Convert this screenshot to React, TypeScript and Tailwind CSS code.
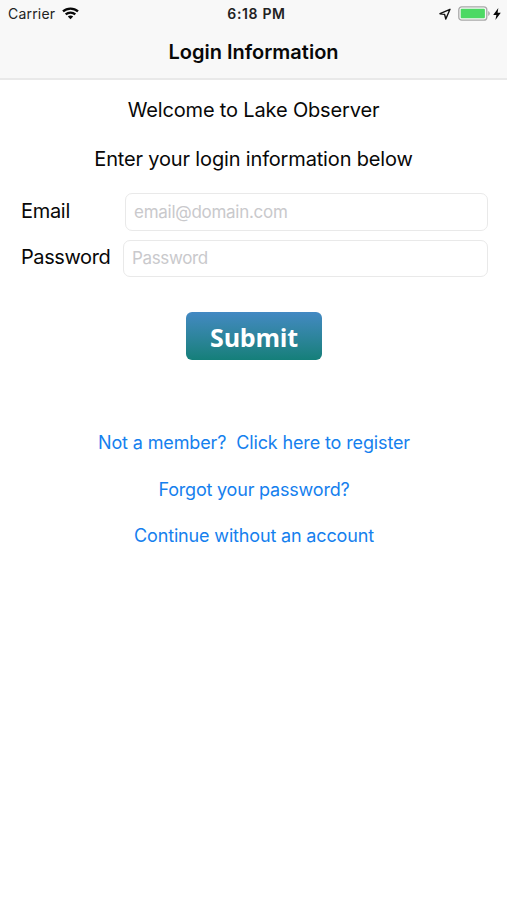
function WifiIcon() {
  return (
    <svg className="ml-[7px] h-[13px] w-[17px]" viewBox="0 0 17 13" fill="none" stroke="#080808" strokeWidth="2.3">
      <path d="M1 4.4C5.2.6 11.8.6 16 4.4" />
      <path d="M3.7 7.4c2.7-2.5 6.9-2.5 9.6 0" />
      <path d="M8.5 12.3 5.8 9.6c1.5-1.4 3.9-1.4 5.4 0Z" fill="#080808" stroke="none" />
    </svg>
  );
}

function StatusBar() {
  return (
    <div className="grid h-[27px] grid-cols-3 items-center text-[#222]">
      <div className="flex items-center pl-2">
        <span className="text-[14px] tracking-[0.2px]">Carrier</span>
        <WifiIcon />
      </div>
      <span className="pl-[6px] text-center text-[14px] font-semibold tracking-[0.65px]">6:18 PM</span>
      <div className="flex items-center justify-end pr-[6px]">
        <svg className="h-3 w-3" viewBox="0 0 12 12" fill="none" stroke="#111" strokeWidth="1.4" strokeLinejoin="round">
          <path d="M11 1.3 1 5.7l4.6.7L6.8 11Z" />
        </svg>
        <svg className="ml-[7px] h-[15px] w-[33px]" viewBox="0 0 33 15">
          <rect x=".8" y=".8" width="28" height="13.4" rx="3" fill="#f8f8f8" stroke="#a8a8a8" strokeWidth="1.3" />
          <rect x="2.7" y="2.7" width="24.2" height="9.6" rx="1" fill="#4cd964" />
          <path d="M30.2 5q1.6.7 1.6 2.5t-1.6 2.5Z" fill="#a8a8a8" />
        </svg>
        <svg className="ml-[2px] h-3 w-2" viewBox="0 0 8 12">
          <path d="M5.3 0 .2 7h3.2L2.4 12 7.8 4.8H4.6Z" fill="#080808" />
        </svg>
      </div>
    </div>
  );
}

export default function App() {
  return (
    <main className="flex min-h-screen w-full flex-col bg-white font-['Inter',sans-serif] text-[#080808]">
      <header className="h-20 border-b-2 border-[#e9e9e9] bg-[#f8f8f8]">
        <StatusBar />
        <h1 className="mt-[10px] text-center text-[20px] leading-[30px] font-semibold tracking-[0px]">Login Information</h1>
      </header>
      <section className="pt-[15px] text-center text-[20px] leading-[30px]">
        <p className="tracking-[-0.16px]">Welcome to Lake Observer</p>
        <p className="mt-[19px] tracking-[-0.16px]">Enter your login information below</p>
      </section>
      <form className="flex flex-col pr-[19px] pl-[21px]" onSubmit={(event) => event.preventDefault()}>
        <div className="mt-[19px] flex h-[38px]">
          <label htmlFor="email" className="w-[104px] pt-[3px] text-[20px] leading-[30px] tracking-[-0.3px]">Email</label>
          <input id="email" type="email" placeholder="email@domain.com" className="min-w-0 flex-1 rounded-[7px] border border-[#e9e9e9] px-2 pt-[2px] text-[17px] tracking-[-0.27px] outline-none placeholder:text-[#c9c9cc]" />
        </div>
        <div className="mt-[9px] flex h-[37px]">
          <label htmlFor="password" className="w-[102px] pt-[2px] text-[20px] leading-[30px] tracking-[-0.4px]">Password</label>
          <input id="password" type="password" placeholder="Password" className="min-w-0 flex-1 rounded-[7px] border border-[#e9e9e9] px-2 text-[17px] tracking-[-0.35px] outline-none placeholder:text-[#c9c9cc]" />
        </div>
        <button className="mt-[35px] ml-[165px] h-12 w-[136px] rounded-[6px] bg-linear-to-b from-[#4389c3] to-[#147f79] pt-[2px] font-['Open_Sans',sans-serif] text-[25px] leading-[46px] font-bold tracking-[-0.2px] text-white">Submit</button>
      </form>
      <nav className="mt-[68px] flex flex-col items-center gap-[16.5px] pl-px text-[18px] leading-[30px] text-[#1580ee]">
        <a href="#register" className="whitespace-pre tracking-[-0.13px]">Not a member?  Click here to register</a>
        <a href="#forgot" className="tracking-[-0.2px]">Forgot your password?</a>
        <a href="#guest" className="tracking-[-0.16px]">Continue without an account</a>
      </nav>
    </main>
  );
}
